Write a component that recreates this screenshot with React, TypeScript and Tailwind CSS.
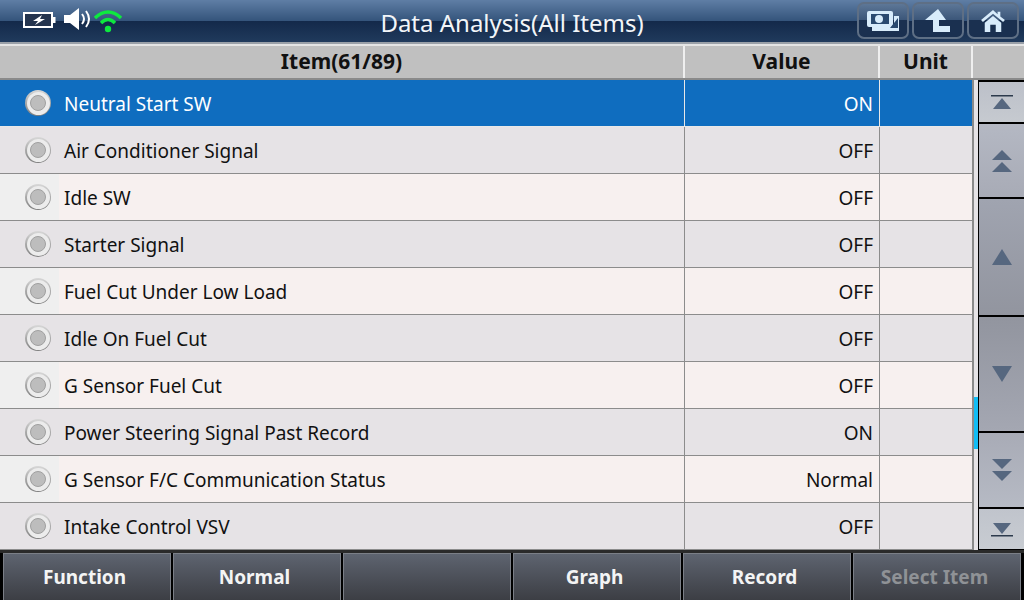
const rows = [
  ["Neutral Start SW", "ON"],
  ["Air Conditioner Signal", "OFF"],
  ["Idle SW", "OFF"],
  ["Starter Signal", "OFF"],
  ["Fuel Cut Under Low Load", "OFF"],
  ["Idle On Fuel Cut", "OFF"],
  ["G Sensor Fuel Cut", "OFF"],
  ["Power Steering Signal Past Record", "ON"],
  ["G Sensor F/C Communication Status", "Normal"],
  ["Intake Control VSV", "OFF"],
];

function Tri({ down, bar }: { down?: boolean; bar?: "top" | "bottom" }) {
  return (
    <svg width="22" height="15" viewBox="0 0 22 15">
      {down ? <polygon points="2,1 20,1 11,12" fill="#56677f" /> : <polygon points="2,14 20,14 11,3" fill="#56677f" />}
      {bar === "top" && <rect x="0" y="0" width="22" height="1.5" fill="#2c3a4c" />}
      {bar === "bottom" && <rect x="0" y="13" width="22" height="1.5" fill="#2c3a4c" />}
    </svg>
  );
}

function Double({ down }: { down?: boolean }) {
  return (
    <svg width="20" height="24" viewBox="0 0 20 24">
      {down ? (
        <>
          <polygon points="0,1 20,1 10,11" fill="#56677f" />
          <polygon points="0,13 20,13 10,23" fill="#56677f" />
        </>
      ) : (
        <>
          <polygon points="0,11 20,11 10,1" fill="#56677f" />
          <polygon points="0,23 20,23 10,13" fill="#56677f" />
        </>
      )}
    </svg>
  );
}

function Single({ down }: { down?: boolean }) {
  return (
    <svg width="20" height="18" viewBox="0 0 20 18">
      {down ? <polygon points="0,1 20,1 10,17" fill="#56677f" /> : <polygon points="0,17 20,17 10,1" fill="#56677f" />}
    </svg>
  );
}

function Radio() {
  return (
    <div className="w-[26px] h-[26px] rounded-full bg-gradient-to-b from-[#d8d8d8] to-[#7e7e7e] flex items-center justify-center">
      <div className="w-[23px] h-[23px] rounded-full bg-[#ececec] flex items-center justify-center">
        <div className="w-[16px] h-[16px] rounded-full bg-[#bdbdbd] border border-[#a0a0a0]" />
      </div>
    </div>
  );
}

function HeadBtn({ children }: { children: React.ReactNode }) {
  return (
    <div className="w-[52px] h-[37px] rounded-[7px] border-2 border-[#5e6f85] bg-gradient-to-b from-[#5d7797] from-0% via-[#3a5578] via-50% to-[#1a3050] to-50% flex items-center justify-center">
      {children}
    </div>
  );
}

function FootBtn({ label, dim, w }: { label: string; dim?: boolean; w: string }) {
  return (
    <div className={`${w} h-full border-l border-t border-r border-[#7b7f87] bg-gradient-to-b from-[#5e6470] to-[#3c3e44] flex items-center justify-center pr-[5px] text-[19px] font-bold ${dim ? "text-[#8f9296]" : "text-[#f4f4f4]"}`}>
      {label}
    </div>
  );
}

export default function App() {
  const sans = { fontFamily: '"Noto Sans", sans-serif' };
  return (
    <div className="w-[1024px] h-[600px] overflow-hidden flex flex-col bg-[#e6e3e6] text-[#111]" style={sans}>
      <header className="h-[44px] shrink-0 flex items-center relative bg-[linear-gradient(to_bottom,#5f7ea5_0%,#34547b_50%,#13294a_50%,#203a5c_100%)] border-b-2 border-[#9aa0a8]">
        <div className="absolute left-[23px] top-[7px] flex items-start">
          <svg width="34" height="17" viewBox="0 0 34 17" className="mt-[4px]">
            <rect x="1" y="2" width="28" height="14" fill="#24344e" stroke="#fff" strokeWidth="2" />
            <rect x="29.5" y="6" width="3" height="6" fill="#fff" />
            <polygon points="19,4 10,10 15,10 12,14 22,8 17,8" fill="#fff" />
          </svg>
          <svg width="30" height="24" viewBox="0 0 30 24" className="ml-[6px]">
            <polygon points="1,8 7,8 16,1 16,23 7,16 1,16" fill="#fff" />
            <path d="M19 7 Q23 12 19 17" stroke="#fff" strokeWidth="2" fill="none" />
            <path d="M23 4 Q29 12 23 20" stroke="#fff" strokeWidth="2" fill="none" />
          </svg>
          <svg width="28" height="24" viewBox="0 0 28 24" className="ml-[1px] mt-[2px]">
            <path d="M1 9 Q14 -3 27 9" stroke="#0ee83f" strokeWidth="3.5" fill="none" />
            <path d="M7 14 Q14 7 21 14" stroke="#0ee83f" strokeWidth="3.5" fill="none" />
            <circle cx="14" cy="20" r="3.2" fill="#0ee83f" />
          </svg>
        </div>
        <div className="absolute left-0 right-0 top-[7px] text-center text-[24px] leading-[32px] text-[#f2f5f8]">
          Data Analysis(All Items)
        </div>
        <div className="ml-auto flex gap-[3px] pr-[5px] pb-[1px] z-10">
          <HeadBtn>
            <svg width="34" height="26" viewBox="0 0 34 26">
              <rect x="1" y="3" width="26" height="16" rx="2" fill="#d8ecfb" />
              <rect x="5" y="6" width="18" height="10" fill="#2a4a70" />
              <circle cx="13" cy="11" r="4" fill="#d8ecfb" />
              <rect x="6" y="19" width="26" height="4" fill="#d8ecfb" />
              <rect x="28" y="8" width="5" height="15" fill="#d8ecfb" />
              <polygon points="24,20 32,10 32,20" fill="#2a4a70" />
            </svg>
          </HeadBtn>
          <HeadBtn>
            <svg width="26" height="26" viewBox="0 0 26 26">
              <polygon points="13,1 0,12 8,12 8,24 25,24 25,18 14,18 14,12 21,12" fill="#d8ecfb" />
            </svg>
          </HeadBtn>
          <HeadBtn>
            <svg width="24" height="22" viewBox="0 0 26 24">
              <polygon points="13,0 0,11 2,13 13,4 24,13 26,11 21,7 21,2 18,2 18,4.5" fill="#d8ecfb" />
              <path d="M4 14 L13 6.5 L22 14 V24 H16 V16 H10 V24 H4 Z" fill="#d8ecfb" />
            </svg>
          </HeadBtn>
        </div>
      </header>

      <div className="h-[36px] shrink-0 flex bg-[#c0c0c0] text-[21px] font-bold border-b-2 border-[#8a8a8a] border-t-2 border-t-[#e4e4e4]">
        <div className="w-[685px] flex items-center justify-center border-r-2 border-[#efefef]">Item(61/89)</div>
        <div className="w-[195px] flex items-center justify-center border-r-2 border-[#efefef]">Value</div>
        <div className="w-[93px] flex items-center justify-center border-r-2 border-[#efefef]">Unit</div>
        <div className="flex-1" />
      </div>

      <div className="h-[470px] shrink-0 flex">
        <div className="w-[972px] flex flex-col">
          {rows.map(([name, value], i) => {
            const selected = i === 0;
            const bg = selected ? "bg-[#0f6dbf] text-white" : i % 2 === 1 ? "bg-[#e6e3e6]" : "bg-[#f7f0ef]";
            const tint = selected ? "" : i % 2 === 1 ? "bg-[#e6e3e6]" : "bg-[#efefef]";
            const line = selected ? "border-[#e8e8e8]" : "border-[#8c8c8c]";
            return (
              <div key={name} className={`h-[47px] flex text-[19px] border-b ${line} ${bg}`}>
                <div className={`w-[685px] flex items-center border-r ${line}`}>
                  <div className={`w-[59px] h-full flex items-center justify-center pl-[17px] ${tint}`}>
                    <Radio />
                  </div>
                  <span className="pl-[5px] pt-[2px]">{name}</span>
                </div>
                <div className={`w-[195px] flex items-center justify-end pr-[6px] pt-[2px] border-r ${line}`}>{value}</div>
                <div className="flex-1" />
              </div>
            );
          })}
        </div>
        <div className="flex-1 relative bg-[#e6e3e6] border-l-[2px] border-[#8a8a8a] flex justify-end">
          <div className="absolute left-[0px] top-[317px] w-[4px] h-[52px] bg-[#12bdf5]" />
          <div className="w-[46px] bg-black flex flex-col gap-[2px] pt-[2px] pl-[1px]">
            <div className="h-[40px] bg-gradient-to-b from-[#bcc0c9] to-[#c6cad0] flex items-center justify-center"><Tri bar="top" /></div>
            <div className="h-[73px] bg-gradient-to-b from-[#b4b8c3] to-[#a8abb6] flex items-center justify-center"><Double /></div>
            <div className="h-[116px] bg-gradient-to-b from-[#a0a4b0] to-[#92959f] flex items-center justify-center"><Single /></div>
            <div className="h-[114px] bg-gradient-to-b from-[#92959f] to-[#a4a7b2] flex items-center justify-center"><Single down /></div>
            <div className="h-[74px] bg-gradient-to-b from-[#a8abb6] to-[#b6bac4] flex items-center justify-center"><Double down /></div>
            <div className="h-[40px] bg-gradient-to-b from-[#c0c4cc] to-[#c8ccd2] flex items-center justify-center"><Tri down bar="bottom" /></div>
          </div>
        </div>
      </div>

      <footer className="flex-1 flex bg-black border-t-[3px] border-[#2a2a2a] gap-[2px] pl-[3px] pr-[1px]">
        <FootBtn label="Function" w="w-[168px]" />
        <FootBtn label="Normal" w="w-[168px]" />
        <FootBtn label="" w="w-[168px]" />
        <FootBtn label="Graph" w="w-[168px]" />
        <FootBtn label="Record" w="w-[168px]" />
        <FootBtn label="Select Item" dim w="w-[168px]" />
      </footer>
    </div>
  );
}
